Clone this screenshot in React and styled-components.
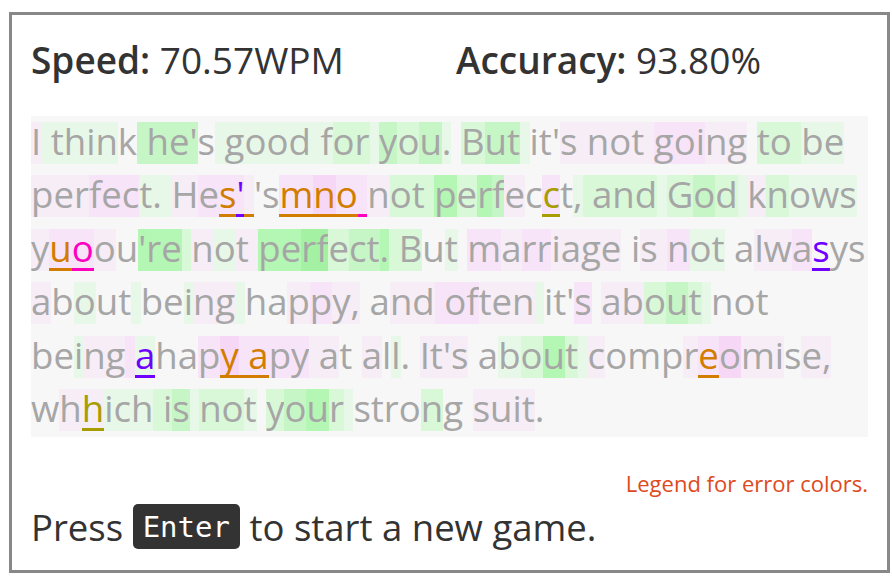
import React from "react";
import styled, { createGlobalStyle } from "styled-components";

const GlobalStyle = createGlobalStyle`
  html, body {
    margin: 0;
    background: #fff;
  }
  body {
    font-family: "Open Sans", "Noto Sans", sans-serif;
  }
`;

// heat map of typing speed per character: green = fast, pink = slow
const heat = {
  g1: "#e8f8e8",
  g2: "#d8f8d8",
  g3: "#c6f6c6",
  g4: "#b4f6b4",
  g5: "#a4f1a4",
  p1: "#f6edf6",
  p2: "#f8e4f8",
  p3: "#f6d8f6",
};

const errColors = {
  o: "#d27d00",
  v: "#7000ff",
  m: "#ff00c0",
  y: "#a79d00",
};

const passage = [
  [["I", "p1"], [" thin", "g1"], ["k"], [" he'", "g3"], ["s"], [" good f", "g1"], ["or", "g2"], [" ", "g1"], ["y", "g3"], ["o", "g2"], ["u", "g3"], [".", "g1"], [" "], ["B", "g2"], ["ut", "g3"], [" ", "g1"], ["it'"], ["s not ", "p1"], ["goi", "p2"], ["ng", "p1"], [" "], ["to ", "g2"], ["be", "g1"]],
  [["per", "p1"], ["fec", "p2"], ["t. ", "g1"], ["H", "p1"], ["e", "p2"], ["s", "p2", "o"], ["'", "p2", "v"], [" ", "p1", "o"], ["'s"], ["m", "p2", "o"], ["n", "p3", "o"], ["o", "p2", "o"], [" ", "p2", "m"], ["n", "p1"], ["ot ", "g2"], ["p", "g4"], ["e", "g2"], ["r", "g4"], ["f", "g3"], ["e", "p1"], ["c"], ["c", "p2", "y"], ["t"], [",", "g1"], [" and", "g2"], [" ", "g1"], ["G", "g2"], ["o", "g3"], ["d", "g2"], [" ", "g1"], ["k", "p1"], ["n", "g2"], ["ows", "g1"]],
  [["y", "p1"], ["u", "p2", "o"], ["o", "p2", "m"], ["o", "p1"], ["u"], ["'re", "g4"], [" ", "g2"], ["n", "p1"], ["o", "g1"], ["t ", "p1"], ["pe", "g4"], ["rf", "g5"], ["e", "g2"], ["ct", "g3"], [".", "g4"], [" B", "g2"], ["u"], ["t", "g1"], [" "], ["m", "p2"], ["a", "p1"], ["rr", "p2"], ["iage", "p1"], [" i"], ["s ", "p1"], ["n", "p2"], ["ot", "g1"], [" a"], ["lw", "p1"], ["a", "p2"], ["s", null, "v"], ["ys"]],
  [["a", "p1"], ["b"], ["o", "g1"], ["ut"], [" ", "g1"], ["be"], ["i", "g1"], ["ng", "p1"], [" ", "g1"], ["ha"], ["p", "p1"], ["p", "p2"], ["y,", "p1"], [" a"], ["nd", "p1"], [" of", "p2"], ["ten", "p1"], [" ", "g1"], ["it'"], ["s", "p2"], [" "], ["ab", "p1"], ["o", "g2"], ["u", "g3"], ["t", "g2"], [" ", "g1"], ["not"]],
  [["be"], ["i", "g1"], ["ng", "p1"], [" ", "p2"], ["a", "g1", "v"], ["ha"], ["p", "p2"], ["y", "p3", "o"], [" ", "p2", "o"], ["a", "p2", "o"], ["py", "p2"], [" a", "p1"], ["t "], ["a", "p1"], ["l"], ["l", "g1"], [". "], ["It's", "p1"], [" a"], ["b", "g1"], ["o", "g2"], ["u", "g4"], ["t", "g2"], [" ", "g1"], ["c", "p1"], ["omp"], ["r", "p1"], ["e", "p2", "o"], ["o", "p3"], ["mi", "p1"], ["s"], ["e", "p1"], [",", "p1"]],
  [["w"], ["h", "p1"], ["h", "p1", "y"], ["ich", "g1"], [" i", "g2"], ["s", "g3"], [" ", "g1"], ["no", "g2"], ["t", "g1"], [" "], ["y", "g2"], ["o", "g3"], ["u", "g4"], ["r", "g2"], [" ", "g1"], ["stro"], ["n", "g2"], ["g"], [" "], ["suit", "p1"], ["."]],
];

const Page = styled.div`
  padding: 12px 2px 0 9px;
`;

const Board = styled.div`
  box-sizing: border-box;
  width: 881px;
  height: 561px;
  border: 3px solid #888;
  padding: 0 19px;
  display: flex;
  flex-direction: column;
`;

const Stats = styled.div`
  display: grid;
  grid-template-columns: 425px auto;
  height: 101px;
  box-sizing: border-box;
  padding-top: 25px;
  color: #333;
  font-size: 37px;
  line-height: 40px;
`;

const Stat = styled.div`
  white-space: nowrap;
`;

const Label = styled.span`
  font-weight: 600;
`;

const Passage = styled.div`
  background: #f7f7f7;
  font-size: 36.6px;
`;

const Line = styled.div`
  display: flex;
  align-items: center;
  height: 53.5px;
`;

const Glyph = styled.span`
  display: inline-block;
  box-sizing: border-box;
  height: 42px;
  line-height: 38px;
  padding-bottom: 3px;
  white-space: pre;
  color: ${(p) => (p.$err ? errColors[p.$err] : "#a6a6a6")};
  background: ${(p) => (p.$bg ? heat[p.$bg] : "transparent")};
  box-shadow: ${(p) => (p.$err ? `inset 0 -3px 0 ${errColors[p.$err]}` : "none")};
`;

const Legend = styled.div`
  margin-top: 34px;
  text-align: right;
  color: #dd4a1c;
  font-size: 22px;
  line-height: 24px;
`;

const Footer = styled.div`
  margin-top: 9px;
  display: flex;
  align-items: center;
  height: 45px;
  color: #333;
  font-size: 36.5px;
  white-space: pre;
`;

const Key = styled.kbd`
  display: inline-flex;
  align-items: center;
  height: 45px;
  padding: 0 10px;
  border-radius: 5px;
  background: #333;
  color: #fff;
  font-family: "DejaVu Sans Mono", monospace;
  font-size: 29px;
`;

const App = () => (
  <Page>
    <GlobalStyle />
    <Board>
      <Stats>
        <Stat>
          <Label>Speed:</Label> 70.57WPM
        </Stat>
        <Stat>
          <Label>Accuracy:</Label> 93.80%
        </Stat>
      </Stats>
      <Passage>
        {passage.map((line, i) => (
          <Line key={i}>
            {line.map(([text, bg, err], j) => (
              <Glyph key={j} $bg={bg} $err={err}>
                {text}
              </Glyph>
            ))}
          </Line>
        ))}
      </Passage>
      <Legend>Legend for error colors.</Legend>
      <Footer>
        Press <Key>Enter</Key> to start a new game.
      </Footer>
    </Board>
  </Page>
);

export default App;
